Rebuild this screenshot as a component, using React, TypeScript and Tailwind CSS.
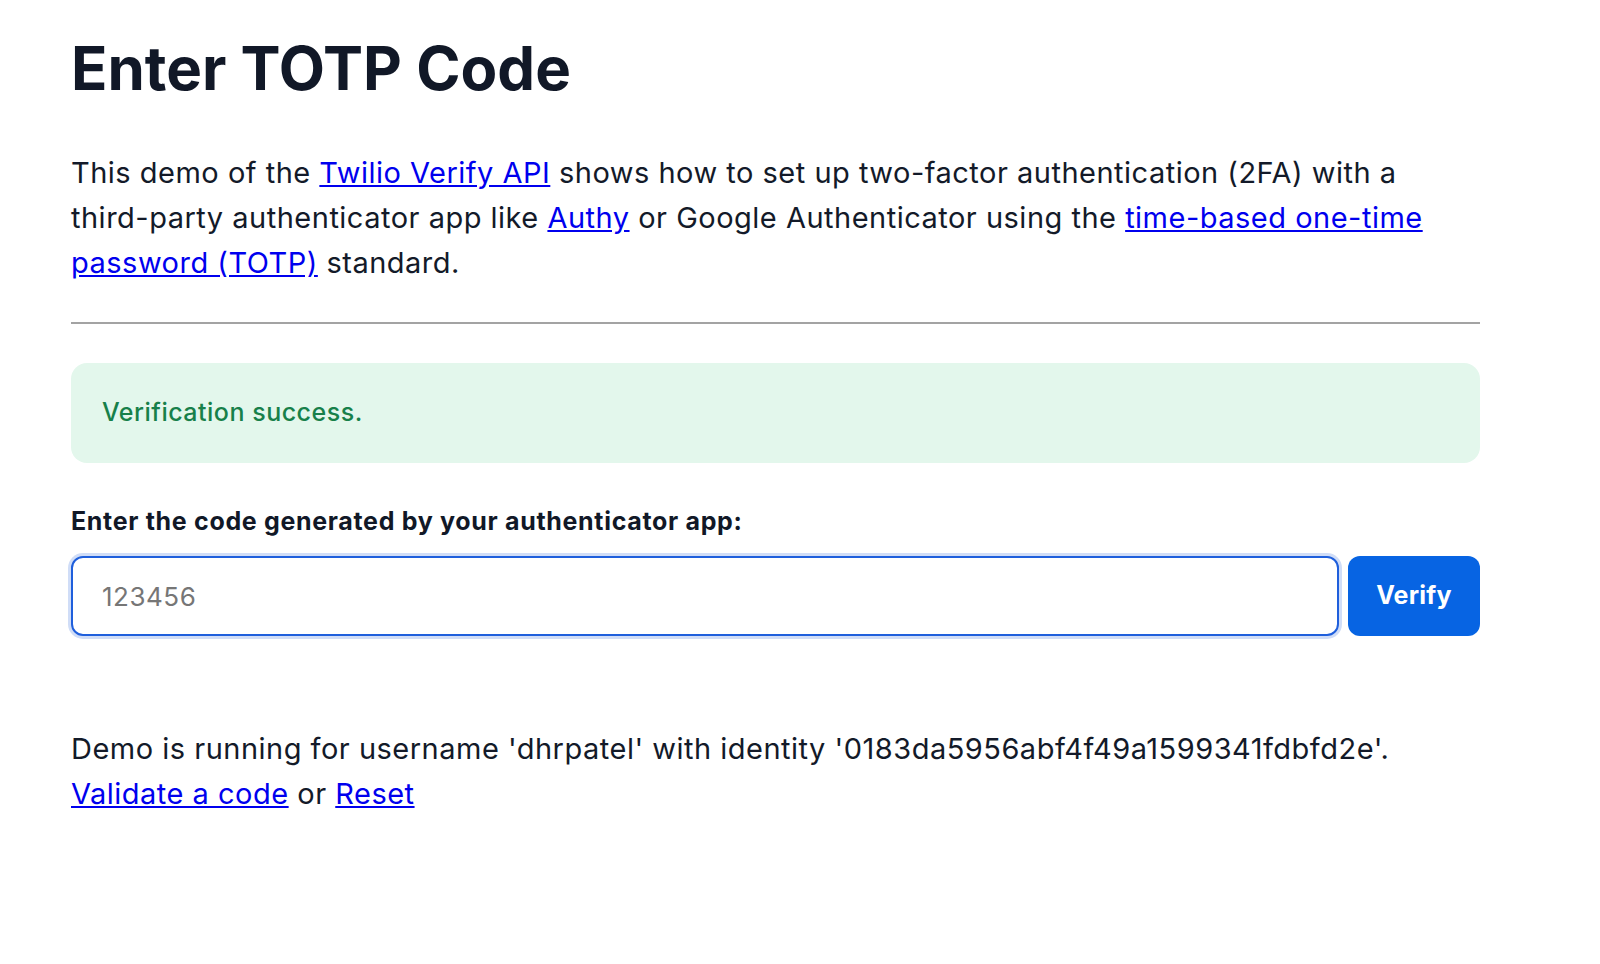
export default function App() {
  return (
    <div className="min-h-screen bg-white font-['Inter',sans-serif] text-[#131a29]">
      <div className="ml-[71px] w-[1409px] pt-[38px]">
        <h1 className="text-6xl font-bold leading-none text-[#111827]">Enter TOTP Code</h1>

        <p className="mt-[52px] text-[29px] leading-[45px] tracking-[0.017em]">
          This demo of the{" "}
          <a href="#" className="text-[#0000ee] underline">
            Twilio Verify API
          </a>{" "}
          shows how to set up two-factor authentication (2FA) with a third-party authenticator app like{" "}
          <a href="#" className="text-[#0000ee] underline">
            Authy
          </a>{" "}
          or Google Authenticator using the{" "}
          <a href="#" className="text-[#0000ee] underline">
            time-based one-time password (TOTP)
          </a>{" "}
          standard.
        </p>

        <hr className="mt-[37px] border-t-2 border-[#a3a3a3]" />

        <div className="mt-[39px] flex h-[100px] items-center rounded-2xl bg-[#e3f7ec] px-[31px] text-[25px] font-medium tracking-[0.02em] text-[#17804a]">
          Verification success.
        </div>

        <label htmlFor="code" className="mt-[42px] block text-[25px] font-bold leading-8 tracking-[0.027em] text-[#111827]">
          Enter the code generated by your authenticator app:
        </label>

        <div className="mt-[19px] flex gap-[9px]">
          <input
            id="code"
            type="text"
            placeholder="123456"
            className="h-[80px] min-w-0 flex-1 rounded-xl border-2 border-[#1f5fdc] bg-white px-[29px] text-[26px] tracking-[0.02em] outline-none ring-[3px] ring-[#d0ddf7] placeholder:text-[#767676]"
          />
          <button className="h-[80px] w-[132px] rounded-xl bg-[#0764e3] text-[25px] font-bold tracking-[0.01em] text-white">
            Verify
          </button>
        </div>

        <p className="mt-[90px] text-[29px] leading-[45px] tracking-[0.017em]">
          Demo is running for username 'dhrpatel' with identity '0183da5956abf4f49a1599341fdbfd2e'.
          <br />
          <a href="#" className="text-[#0000ee] underline">
            Validate a code
          </a>{" "}
          or{" "}
          <a href="#" className="text-[#0000ee] underline">
            Reset
          </a>
        </p>
      </div>
    </div>
  );
}
